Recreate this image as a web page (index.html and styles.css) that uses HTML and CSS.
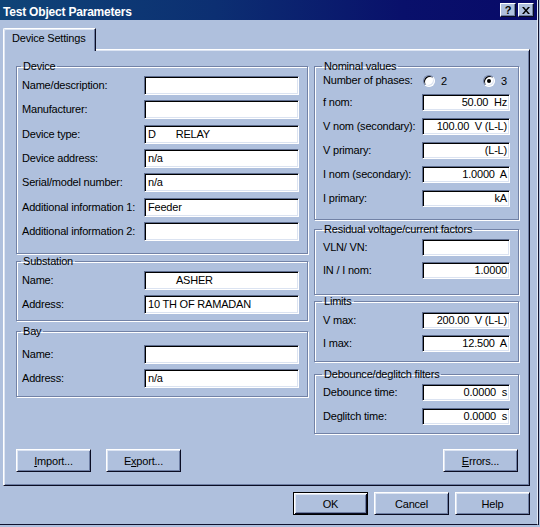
FILE: index.html
```html
<!DOCTYPE html>
<html>
<head>
<meta charset="utf-8">
<title>Test Object Parameters</title>
<link rel="stylesheet" href="styles.css">
</head>
<body>
<div class="window">
  <div class="titlebar">
    <span class="title">Test Object Parameters</span>
    <div class="tb-buttons">
      <span class="tb-btn tb-help">?</span>
      <span class="tb-btn"><svg width="8" height="7" viewBox="0 0 8 7"><path d="M0 0h2l2 2.5L6 0h2L5 3.5 8 7H6L4 4.5 2 7H0l3-3.5z" fill="#000"/></svg></span>
    </div>
  </div>
  <div class="client">
    <div class="tabs"><div class="tab">Device Settings</div></div>
    <div class="panel">
      <div class="columns">
        <div class="col">
          <fieldset class="group g-device">
            <legend>Device</legend>
            <div class="rows rows-left">
              <span class="lbl">Name/description:</span><span class="field"></span>
              <span class="lbl">Manufacturer:</span><span class="field"></span>
              <span class="lbl">Device type:</span><span class="field">D       RELAY</span>
              <span class="lbl">Device address:</span><span class="field">n/a</span>
              <span class="lbl">Serial/model number:</span><span class="field">n/a</span>
              <span class="lbl">Additional information 1:</span><span class="field">Feeder</span>
              <span class="lbl">Additional information 2:</span><span class="field"></span>
            </div>
          </fieldset>
          <fieldset class="group g-sub">
            <legend>Substation</legend>
            <div class="rows rows-left">
              <span class="lbl">Name:</span><span class="field">          ASHER</span>
              <span class="lbl">Address:</span><span class="field">10 TH OF RAMADAN</span>
            </div>
          </fieldset>
          <fieldset class="group g-bay">
            <legend>Bay</legend>
            <div class="rows rows-left">
              <span class="lbl">Name:</span><span class="field"></span>
              <span class="lbl">Address:</span><span class="field">n/a</span>
            </div>
          </fieldset>
        </div>
        <div class="col">
          <fieldset class="group right g-nom">
            <legend>Nominal values</legend>
            <div class="rows rows-right rows-nom">
              <span class="lbl">Number of phases:</span>
              <span class="radios">
                <span class="radio-item"><span class="radio"></span><span>2</span></span>
                <span class="radio-item"><span class="radio checked"></span><span>3</span></span>
              </span>
              <span class="lbl">f nom:</span><span class="field num">50.00  Hz</span>
              <span class="lbl">V nom (secondary):</span><span class="field num">100.00  V (L-L)</span>
              <span class="lbl">V primary:</span><span class="field num">(L-L)</span>
              <span class="lbl">I nom (secondary):</span><span class="field num">1.0000  A</span>
              <span class="lbl">I primary:</span><span class="field num">kA</span>
            </div>
          </fieldset>
          <fieldset class="group right g-res">
            <legend>Residual voltage/current factors</legend>
            <div class="rows rows-right">
              <span class="lbl">VLN/ VN:</span><span class="field num"></span>
              <span class="lbl">IN / I nom:</span><span class="field num">1.0000</span>
            </div>
          </fieldset>
          <fieldset class="group right g-lim">
            <legend>Limits</legend>
            <div class="rows rows-right">
              <span class="lbl">V max:</span><span class="field num">200.00  V (L-L)</span>
              <span class="lbl">I max:</span><span class="field num">12.500  A</span>
            </div>
          </fieldset>
          <fieldset class="group right g-deb">
            <legend>Debounce/deglitch filters</legend>
            <div class="rows rows-right rows-deb">
              <span class="lbl">Debounce time:</span><span class="field num">0.0000  s</span>
              <span class="lbl">Deglitch time:</span><span class="field num">0.0000  s</span>
            </div>
          </fieldset>
        </div>
      </div>
      <div class="panel-buttons">
        <button class="btn"><u>I</u>mport...</button>
        <button class="btn">E<u>x</u>port...</button>
        <button class="btn btn-errors"><u>E</u>rrors...</button>
      </div>
    </div>
    <div class="dialog-buttons">
      <button class="btn btn-default">OK</button>
      <button class="btn">Cancel</button>
      <button class="btn">Help</button>
    </div>
  </div>
</div>
</body>
</html>
```
FILE: styles.css
```css
* { box-sizing: border-box; }
html, body { margin: 0; padding: 0; }
body {
  width: 540px;
  height: 527px;
  overflow: hidden;
  background: #afc0dd;
  font-family: "Liberation Sans", Arial, sans-serif;
  font-size: 11px;
  letter-spacing: -0.2px;
  color: #000;
}
.window {
  width: 538px;
  height: 525px;
  border-right: 1px solid #e4ebf6;
  border-bottom: 1px solid #10122e;
  box-shadow: 1px 0 0 #10122e;
  display: flex;
  flex-direction: column;
}
.titlebar {
  height: 20px;
  flex: none;
  display: flex;
  justify-content: space-between;
  align-items: flex-start;
  padding: 0 3px;
  background: linear-gradient(90deg, #0f4477 0%, #0c2f72 40%, #09106b 75%, #080a68 100%);
  color: #fff;
}
.title {
  font-weight: bold;
  font-size: 12px;
  letter-spacing: -0.2px;
  line-height: 14px;
  padding-top: 5px;
}
.tb-buttons { display: flex; gap: 2px; margin-top: 3px; }
.tb-btn {
  width: 16px;
  height: 14px;
  background: #afc0dd;
  border: 1px solid;
  border-color: #fff #0a0c22 #0a0c22 #fff;
  box-shadow: inset -1px -1px 0 #6e7ea3;
  display: flex;
  align-items: center;
  justify-content: center;
  color: #000;
  font-weight: bold;
  font-size: 11px;
  line-height: 12px;
}
.client {
  flex: 1;
  display: flex;
  flex-direction: column;
  padding: 8px 7px 0 3px;
}
.tabs { display: flex; height: 21px; }
.tab {
  position: relative;
  z-index: 1;
  width: 93px;
  height: 23px;
  padding: 3px 0 0 8px;
  line-height: 13px;
  background: #afc0dd;
  border-top: 1px solid #fff;
  border-left: 1px solid #fff;
  border-right: 1px solid #0a0c22;
  border-top-left-radius: 2px;
  box-shadow: inset -1px 0 0 #6e7ea3, inset 1px 1px 0 #dde5f3;
}
.panel {
  width: 527px;
  border: 1px solid;
  border-color: #fff #0a0c22 #0a0c22 #fff;
  box-shadow: inset 1px 1px 0 #dde5f3, inset -1px -1px 0 #6e7ea3;
  padding: 10px 10px 13px 12px;
}
.columns {
  display: grid;
  grid-template-columns: 292px 205px;
  column-gap: 6px;
  align-items: start;
}
.col { display: flex; flex-direction: column; }
.group {
  margin: 0;
  padding: 0;
  min-inline-size: 0;
  border: 1px solid #7282a6;
  box-shadow: inset 1px 1px 0 #fff, 1px 1px 0 #fff;
}
.group legend {
  padding: 0 2px;
  margin-left: 4px;
  line-height: 13px;
  height: 13px;
}
.group.right legend { margin-left: 7px; }
.rows {
  display: grid;
  align-items: center;
}
.rows-left {
  grid-template-columns: 122px 155px;
  grid-auto-rows: 19px;
  row-gap: 5px;
  padding: 0 8px 0 5px;
}
.rows-right {
  grid-template-columns: 99px 88px;
  grid-auto-rows: 17px;
  row-gap: 6px;
  padding: 0 8px 0 8px;
}
.rows-nom { grid-template-rows: 13px; row-gap: 7px; }
.rows-deb { row-gap: 7px; }
.lbl { white-space: nowrap; line-height: 13px; }

.g-device { margin-top: 0; }
.g-device .rows { padding-top: 3px; padding-bottom: 12px; row-gap: 5.33px; }
.g-sub { margin-top: 1px; }
.g-sub .rows { padding-top: 3px; padding-bottom: 6px; }
.g-bay { margin-top: 4px; }
.g-bay .rows { padding-top: 7px; padding-bottom: 8px; }

.g-nom .rows { padding-top: 1px; padding-bottom: 12px; }
.g-res { margin-top: 3px; }
.g-res .rows { padding-top: 3px; padding-bottom: 15px; }
.g-lim { margin-top: 0; }
.g-lim .rows { padding-top: 4px; padding-bottom: 9px; }
.g-deb { margin-top: 6px; }
.g-deb .rows { padding-top: 3px; padding-bottom: 8px; }

.field {
  display: block;
  height: 100%;
  background: #fff;
  border: 1px solid;
  border-color: #5d6c8e #fff #fff #5d6c8e;
  box-shadow: inset 1px 1px 0 #000, inset -1px -1px 0 #dbe3f1;
  padding: 0 2px 0 3px;
  white-space: pre;
  overflow: hidden;
  line-height: 17px;
}
.rows-right .field { line-height: 15px; }
.field.num { text-align: right; }

.radios {
  display: flex;
  justify-content: space-between;
  align-items: center;
  padding: 0 3px 0 1px;
}
.radio-item { display: flex; align-items: center; gap: 6px; }
.radio {
  position: relative;
  width: 12px;
  height: 12px;
  border-radius: 50%;
  background: #fff;
  border: 1px solid;
  border-color: #6e7ea3 #fff #fff #6e7ea3;
  box-shadow: inset 1px 1px 0 #000, inset -1px -1px 0 #dbe3f1;
}
.radio.checked::after {
  content: "";
  position: absolute;
  left: 3px;
  top: 3px;
  width: 4px;
  height: 4px;
  border-radius: 50%;
  background: #000;
}

.panel-buttons {
  display: flex;
  gap: 15px;
  margin-top: 15px;
}
.btn {
  width: 75px;
  height: 23px;
  margin: 0;
  padding: 0;
  background: #afc0dd;
  border: 1px solid;
  border-color: #fff #0a0c22 #0a0c22 #fff;
  box-shadow: inset 1px 1px 0 #dde5f3, inset -1px -1px 0 #6e7ea3;
  font-family: inherit;
  font-size: 11px;
  letter-spacing: -0.2px;
  color: #000;
  display: flex;
  align-items: center;
  justify-content: center;
  border-radius: 0;
}
.btn-errors { margin-left: auto; margin-right: 1px; }
.btn-default {
  border-color: #000;
  box-shadow: inset 1px 1px 0 #fff, inset -1px -1px 0 #0a0c22, inset 2px 2px 0 #dde5f3, inset -2px -2px 0 #6e7ea3;
}
.dialog-buttons {
  display: flex;
  justify-content: flex-end;
  gap: 6px;
  margin-top: 6px;
}
```
